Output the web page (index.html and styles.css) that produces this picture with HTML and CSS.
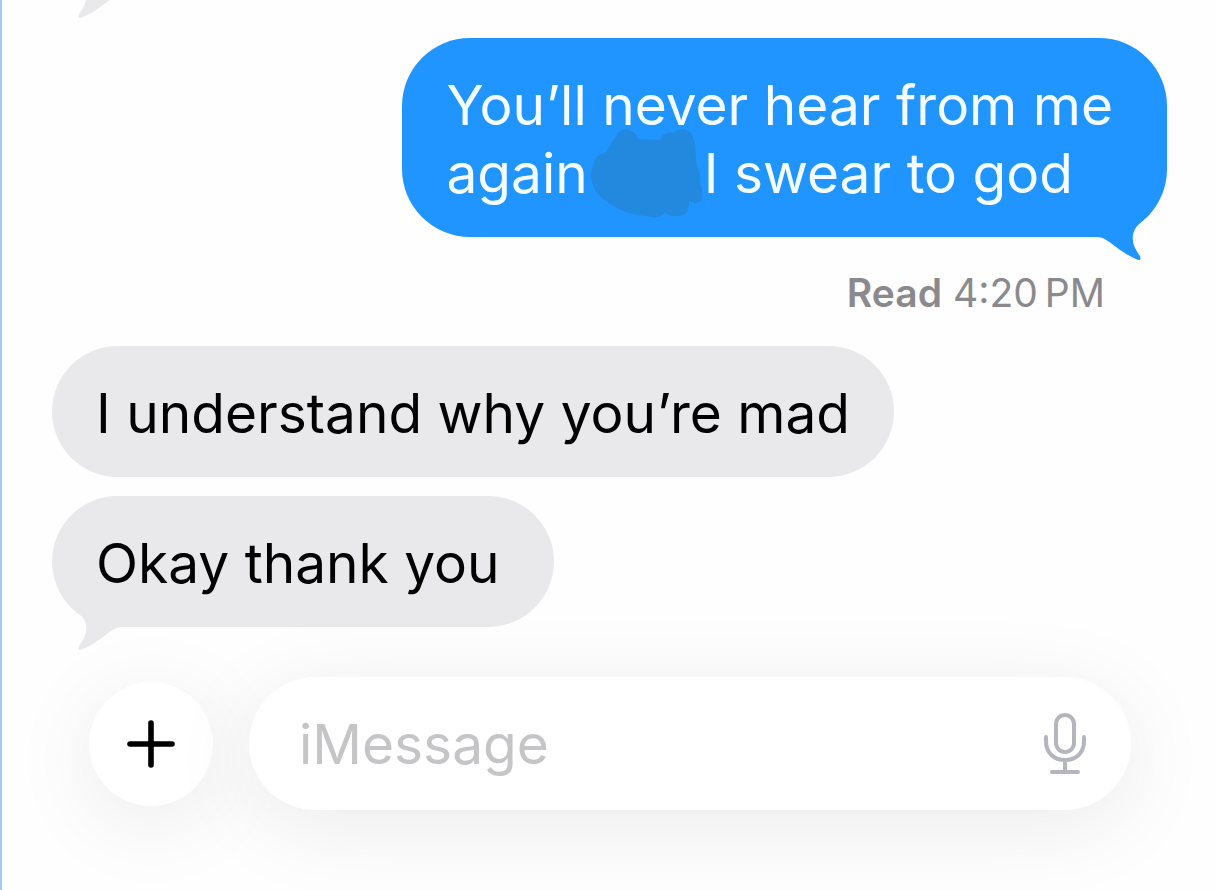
FILE: index.html
```html
<!DOCTYPE html>
<html lang="en">
<head>
<meta charset="utf-8">
<meta name="viewport" content="width=device-width, initial-scale=1">
<title>Messages</title>
<link rel="stylesheet" href="styles.css">
</head>
<body>
<svg class="defs" aria-hidden="true">
  <symbol id="tail" viewBox="0 0 72 72">
    <path d="M2 47C13 47 22 61 41 69Q47 72 45 66C39 58 37 52 38 45C39 37 46 32 55 24L4 10Z"/>
  </symbol>
</svg>
<main class="thread">
  <svg class="tail tail-previous" aria-hidden="true"><use href="#tail"/></svg>
  <div class="bubble sent tailed">
    You’ll never hear from me<br>again<span class="redacted"><svg class="scribble" viewBox="0 0 114 94" aria-hidden="true"><path d="M27 12Q32 1 42 4Q48 7 50 13L72 14Q75 5 86 7Q91 1 99 4Q107 8 107 22L109 40Q113 45 112 58Q121 68 114 74Q108 80 101 74Q102 91 88 90Q80 91 78 86Q70 94 59 90Q28 88 8 66Q0 50 5 40Q6 29 17 27Z"/></svg></span>I swear to god
    <svg class="tail" aria-hidden="true"><use href="#tail"/></svg>
  </div>
  <p class="receipt"><strong>Read</strong> 4:20&#8201;PM</p>
  <div class="bubble received">I understand why you’re mad</div>
  <div class="bubble received tailed">Okay thank you
    <svg class="tail" aria-hidden="true"><use href="#tail"/></svg>
  </div>
</main>
<form class="composer">
  <button class="add" type="button" aria-label="Add attachment">
    <svg class="icon" viewBox="0 0 48 48" aria-hidden="true"><path d="M24 3V45M3 24H45"/></svg>
  </button>
  <div class="field">
    <input class="message" type="text" placeholder="iMessage" aria-label="iMessage">
    <button class="dictate" type="button" aria-label="Dictate">
      <svg class="mic" viewBox="0 0 44 64" aria-hidden="true"><rect x="13" y="3" width="18" height="37" rx="9"/><path d="M3 25V29C3 41 11 48 22 48S41 41 41 29V25M22 48V60M9 60H35"/></svg>
    </button>
  </div>
</form>
</body>
</html>
```
FILE: styles.css
```css
* {
  box-sizing: border-box;
}

body {
  margin: 0;
  min-height: 100vh;
  background: #fefefe;
  border-left: 2px solid #a3cbee;
  font-family: Inter, "Liberation Sans", sans-serif;
  overflow-x: hidden;
}

.defs {
  position: absolute;
  width: 0;
  height: 0;
}

.thread {
  position: relative;
  display: flex;
  flex-direction: column;
  padding: 38px 49px 50px 50px;
}

.bubble {
  position: relative;
  padding: 33px 44px 30px;
  border-radius: 68px;
  font-size: 55px;
  line-height: 68px;
}

.sent {
  align-self: flex-end;
  background: #2094ff;
  color: #f4fdff;
}

.received {
  align-self: flex-start;
  background: #e9e9eb;
  color: #000;
}

.tailed {
  padding-right: 54px;
}

.received + .received {
  margin-top: 19px;
}

.tail {
  position: absolute;
  bottom: -25px;
  width: 72px;
  height: 72px;
}

.sent .tail {
  right: 0;
  fill: #2094ff;
}

.received .tail,
.tail-previous {
  left: 0;
  fill: #e9e9eb;
  transform: scaleX(-1);
}

.tail-previous {
  top: -52px;
  bottom: auto;
  left: 50px;
}

.redacted {
  position: relative;
  display: inline-block;
  width: 116px;
  height: 42px;
}

.scribble {
  position: absolute;
  top: -25px;
  left: 0;
  width: 114px;
  height: 94px;
  fill: #2389df;
}

.receipt {
  align-self: flex-end;
  margin: 32px 62px 29px 0;
  color: #8a8a8e;
  font-size: 39px;
  line-height: 48px;
}

.receipt strong {
  font-weight: 600;
}

.composer {
  display: flex;
  align-items: center;
  gap: 36px;
  padding: 0 85px 80px 87px;
}

.add,
.field {
  background: #fff;
  box-shadow: 0 16px 88px rgba(0, 0, 0, 0.08);
}

.add {
  display: grid;
  place-items: center;
  flex: none;
  width: 124px;
  height: 124px;
  padding: 0;
  border: 0;
  border-radius: 50%;
}

.icon {
  width: 48px;
  height: 48px;
  fill: none;
  stroke: #000;
  stroke-width: 5.6;
  stroke-linecap: round;
}

.field {
  display: flex;
  flex: 1;
  align-items: center;
  min-width: 0;
  padding: 33px 44px 32px 50px;
  border-radius: 68px;
}

.message {
  flex: 1;
  min-width: 0;
  height: 68px;
  padding: 0;
  border: 0;
  outline: 0;
  background: transparent;
  color: #000;
  font: inherit;
  font-size: 55px;
}

.message::placeholder {
  color: #c5c5c7;
  opacity: 1;
}

.dictate {
  display: grid;
  padding: 0;
  border: 0;
  background: transparent;
}

.mic {
  width: 44px;
  height: 64px;
  fill: none;
  stroke: #b5b5bd;
  stroke-width: 4;
  stroke-linecap: round;
}
```
